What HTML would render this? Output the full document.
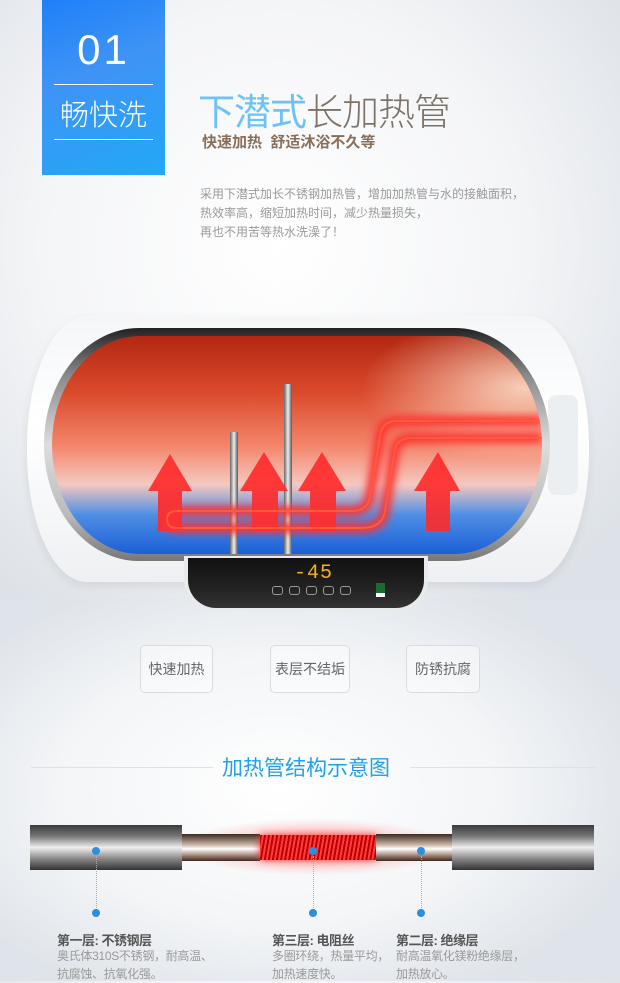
<!DOCTYPE html>
<html><head><meta charset="utf-8"><style>
*{margin:0;padding:0;box-sizing:border-box}
body{width:620px;height:981px;overflow:hidden;position:relative;font-family:"Liberation Sans","Noto Sans CJK SC",sans-serif;background:radial-gradient(ellipse 70% 45% at 45% 25%,#fff 0%,#f4f5f7 55%,#dde2e8 100%)}
.a{position:absolute}
.bg2{left:0;top:600px;width:620px;height:381px;background:radial-gradient(ellipse 60% 60% at 45% 50%,#fff 0%,#f3f5f7 60%,#dfe4ea 100%)}
.blue{left:42px;top:0;width:123px;height:175px;background:linear-gradient(160deg,#1e80f8,#3f93f5 40%,#22a8f7)}
.blue .n{left:0;width:123px;top:26px;text-align:center;color:#fff;font-size:42px;font-weight:normal;letter-spacing:3px;font-family:"Liberation Sans",sans-serif}
.ln{left:12px;width:99px;height:1px;background:#fff}
.blue .c{left:0;width:123px;top:92px;text-align:center;color:#fff;font-size:29px;font-weight:300}
.t1{left:198px;top:82px;font-size:37px;font-weight:300;color:#7c7268;letter-spacing:-1px}
.t1 b{color:#6dc3f6;font-weight:400}
.t2{left:202px;top:131px;font-size:15px;color:#8a6f58;font-weight:bold}
.p{left:200px;top:185px;font-size:12px;line-height:19px;color:#9a9a9a}
.box{top:645px;height:48px;border:1px solid #dcdcdc;border-radius:5px;font-size:14px;color:#666;text-align:center;line-height:46px;background:rgba(255,255,255,.4)}
.hr{top:767px;height:1px;background:#dde2e6}
.ttl{left:222px;top:752px;font-size:21px;color:#1fa2ea}
.dot{width:8px;height:8px;border-radius:50%;background:#2c8fdc}
.vl{width:0;border-left:1px dotted #aab;}
.h{font-size:13px;font-weight:bold;color:#555;letter-spacing:-.5px}
.d{font-size:12px;color:#999;line-height:18px;letter-spacing:-.3px}
</style></head><body>
<div class="a bg2"></div>
<div class="a blue">
 <div class="a n">01</div>
 <div class="a ln" style="top:84px"></div>
 <div class="a c">畅快洗</div>
 <div class="a ln" style="top:139px"></div>
</div>
<div class="a t1"><b>下潜式</b>长加热管</div>
<div class="a t2">快速加热&nbsp; 舒适沐浴不久等</div>
<div class="a p">采用下潜式加长不锈钢加热管，增加加热管与水的接触面积，<br>热效率高，缩短加热时间，减少热量损失，<br>再也不用苦等热水洗澡了！</div>

<div class="a" style="left:27px;top:316px;width:562px;height:266px;border-radius:60px/130px;background:linear-gradient(180deg,#f4f6f8,#fff 40%,#eef0f3);box-shadow:0 4px 10px rgba(0,0,0,.08)"></div>
<div class="a" style="left:548px;top:395px;width:30px;height:100px;border-radius:8px;background:#eceff2"></div>
<div class="a" style="left:44px;top:328px;width:506px;height:233px;border-radius:95px/116px;background:linear-gradient(180deg,#222,#888 20%,#ddd 50%,#bbb 80%,#777)"></div>
<div class="a" style="left:52px;top:336px;width:490px;height:218px;border-radius:88px/109px;overflow:hidden;background:linear-gradient(180deg,#b32813 0%,#d9482a 25%,#f3846a 50%,#f5c8c0 68%,#4f8ee4 82%,#1c5fd8 100%)">
 <div class="a" style="left:280px;top:-20px;width:240px;height:160px;background:radial-gradient(ellipse at 80% 45%,rgba(255,240,220,.8),rgba(255,200,170,0) 60%)"></div>
 <div class="a" style="left:178px;top:96px;width:8px;height:130px;background:linear-gradient(90deg,#666,#eee,#555)"></div>
 <div class="a" style="left:232px;top:48px;width:8px;height:180px;background:linear-gradient(90deg,#666,#eee,#555)"></div>
 <svg class="a" style="left:0;top:0" width="490" height="218">
  <defs><filter id="g"><feGaussianBlur stdDeviation="4"/></filter></defs>
  <g fill="#ff2a2a" opacity=".9">
   <path d="M118 118 L140 155 L130 155 L130 195 L106 195 L106 155 L96 155Z"/>
   <path d="M212 116 L236 155 L226 155 L226 195 L200 195 L200 155 L188 155Z"/>
   <path d="M270 116 L294 155 L284 155 L284 195 L258 195 L258 155 L246 155Z"/>
   <path d="M386 116 L408 155 L398 155 L398 195 L374 195 L374 155 L362 155Z"/>
  </g>
  <path d="M490 85 H345 Q330 85 328 100 L318 160 Q316 175 300 175 H125 Q115 175 115 183 Q115 192 125 192 H310 Q330 192 333 175 L343 113 Q346 102 360 102 H490" fill="none" stroke="#ff3030" stroke-width="10" filter="url(#g)"/>
  <path d="M490 85 H345 Q330 85 328 100 L318 160 Q316 175 300 175 H125 Q115 175 115 183 Q115 192 125 192 H310 Q330 192 333 175 L343 113 Q346 102 360 102 H490" fill="none" stroke="#ff5a3a" stroke-width="2"/>
 </svg>
</div>
<div class="a" style="left:184px;top:556px;width:244px;height:55px;border-radius:0 0 30px 30px;background:#e8eaec"></div>
<div class="a" style="left:188px;top:558px;width:236px;height:50px;border-radius:0 0 28px 28px;background:linear-gradient(180deg,#111,#222 60%,#333)">
 <div class="a" style="left:106px;top:4px;color:#f7b21c;font-size:20px;font-family:'Liberation Mono',monospace;letter-spacing:1px">-45</div>
 <div class="a" style="left:84px;top:28px;width:84px;height:10px;display:flex;gap:6px">
  <span style="width:11px;height:9px;border:1px solid #999;border-radius:3px"></span><span style="width:11px;height:9px;border:1px solid #999;border-radius:3px"></span><span style="width:11px;height:9px;border:1px solid #999;border-radius:3px"></span><span style="width:11px;height:9px;border:1px solid #999;border-radius:3px"></span><span style="width:11px;height:9px;border:1px solid #999;border-radius:3px"></span>
 </div>
 <div class="a" style="left:188px;top:25px;width:9px;height:14px;background:#1c6b2e;border-bottom:4px solid #fff"></div>
</div>

<div class="a box" style="left:140px;width:73px">快速加热</div>
<div class="a box" style="left:270px;width:80px">表层不结垢</div>
<div class="a box" style="left:406px;width:74px">防锈抗腐</div>

<div class="a hr" style="left:31px;width:182px"></div>
<div class="a hr" style="left:410px;width:186px"></div>
<div class="a ttl">加热管结构示意图</div>

<div class="a" style="left:178px;top:818px;width:275px;height:58px;background:radial-gradient(ellipse at center,rgba(255,60,60,.5),rgba(255,60,60,0) 70%)"></div>
<div class="a" style="left:30px;top:825px;width:152px;height:45px;background:linear-gradient(180deg,#3a3a3a,#777 25%,#eee 50%,#888 75%,#333)"></div>
<div class="a" style="left:182px;top:834px;width:78px;height:27px;background:linear-gradient(180deg,#3a2a22,#cbb5a5 40%,#fff 55%,#8a6a5a 85%,#3a2a22)"></div>
<div class="a" style="left:260px;top:835px;width:116px;height:25px;background:repeating-linear-gradient(100deg,#b00 0 2px,#ff3b3b 2px 4px);box-shadow:0 0 8px #f33"></div>
<div class="a" style="left:376px;top:834px;width:76px;height:27px;background:linear-gradient(180deg,#3a2a22,#cbb5a5 40%,#fff 55%,#8a6a5a 85%,#3a2a22)"></div>
<div class="a" style="left:452px;top:825px;width:142px;height:45px;background:linear-gradient(180deg,#3a3a3a,#777 25%,#eee 50%,#888 75%,#333)"></div>

<div class="a dot" style="left:92px;top:847px"></div>
<div class="a dot" style="left:309px;top:847px"></div>
<div class="a dot" style="left:417px;top:847px"></div>
<div class="a vl" style="left:96px;top:856px;height:54px"></div>
<div class="a vl" style="left:313px;top:856px;height:54px"></div>
<div class="a vl" style="left:421px;top:856px;height:54px"></div>
<div class="a dot" style="left:92px;top:909px"></div>
<div class="a dot" style="left:309px;top:909px"></div>
<div class="a dot" style="left:417px;top:909px"></div>

<div class="a h" style="left:57px;top:930px">第一层: 不锈钢层</div>
<div class="a d" style="left:57px;top:947px">奥氏体310S不锈钢，耐高温、<br>抗腐蚀、抗氧化强。</div>
<div class="a h" style="left:272px;top:930px">第三层: 电阻丝</div>
<div class="a d" style="left:272px;top:947px">多圈环绕，热量平均，<br>加热速度快。</div>
<div class="a h" style="left:396px;top:930px">第二层: 绝缘层</div>
<div class="a d" style="left:396px;top:947px">耐高温氧化镁粉绝缘层，<br>加热放心。</div>
</body></html>
